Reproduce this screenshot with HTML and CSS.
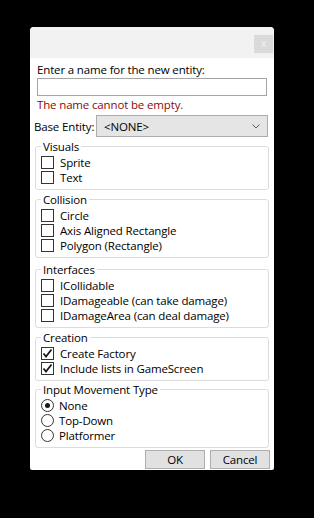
FILE: index.html
```html
<!DOCTYPE html>
<html>
    <head>
        <title>Add Entity</title>
        <link rel="stylesheet" href="styles.css">
    </head>
    <body>
        <div class="window">
            <div class="titlebar">
                <span class="close">x</span>
            </div>
            <div class="content">
                <p class="prompt">Enter a name for the new entity:</p>
                <input class="name_input" type="text">
                <p class="error">The name cannot be empty.</p>
                <div class="base_row">
                    <span class="base_label">Base Entity:</span>
                    <div class="combo">
                        <span>&lt;NONE&gt;</span>
                        <svg width="8" height="5" viewBox="0 0 8 5"><polyline points="0.5,0.5 4,4 7.5,0.5" fill="none" stroke="#606060" stroke-width="1"/></svg>
                    </div>
                </div>

                <fieldset class="group">
                    <legend>Visuals</legend>
                    <label class="row"><span class="check"></span>Sprite</label>
                    <label class="row"><span class="check"></span>Text</label>
                </fieldset>

                <fieldset class="group">
                    <legend>Collision</legend>
                    <label class="row"><span class="check"></span>Circle</label>
                    <label class="row"><span class="check"></span>Axis Aligned Rectangle</label>
                    <label class="row"><span class="check"></span>Polygon (Rectangle)</label>
                </fieldset>

                <fieldset class="group interfaces">
                    <legend>Interfaces</legend>
                    <label class="row"><span class="check"></span>ICollidable</label>
                    <label class="row"><span class="check"></span>IDamageable (can take damage)</label>
                    <label class="row"><span class="check"></span>IDamageArea (can deal damage)</label>
                </fieldset>

                <fieldset class="group">
                    <legend>Creation</legend>
                    <label class="row"><span class="check checked"><svg width="11" height="11" viewBox="0 0 11 11"><polyline points="1.5,5.5 4,8.5 9.5,1.5" fill="none" stroke="#1a1a1a" stroke-width="1.8"/></svg></span>Create Factory</label>
                    <label class="row"><span class="check checked"><svg width="11" height="11" viewBox="0 0 11 11"><polyline points="1.5,5.5 4,8.5 9.5,1.5" fill="none" stroke="#1a1a1a" stroke-width="1.8"/></svg></span>Include lists in GameScreen</label>
                </fieldset>

                <fieldset class="group movement">
                    <legend>Input Movement Type</legend>
                    <label class="row"><span class="radio selected"></span>None</label>
                    <label class="row"><span class="radio"></span>Top-Down</label>
                    <label class="row"><span class="radio"></span>Platformer</label>
                </fieldset>

                <div class="buttons">
                    <button class="btn">OK</button>
                    <button class="btn">Cancel</button>
                </div>
            </div>
        </div>
    </body>
</html>
```

FILE: styles.css
```css
*{
margin: 0;
padding: 0;
box-sizing: border-box;
font-family: 'Open Sans', 'Noto Sans', sans-serif;
}
body{
background: #000;
padding: 27px 0 0 30px;
}
.window{
width: 244px;
height: 443px;
background: #fff;
border-radius: 4px 4px 2px 2px;
overflow: hidden;
}
.titlebar{
height: 31px;
background: #f2f2f2;
display: flex;
justify-content: flex-end;
padding: 8px 1px 0 0;
}
.close{
width: 19px;
height: 18px;
background: #dadada;
color: #f4f4f4;
font-size: 10px;
line-height: 17px;
text-align: center;
}
.content{
padding: 4px 5px 0 5px;
font-size: 11.5px;
letter-spacing: -0.15px;
line-height: 15px;
color: #000;
}
.prompt{
margin-left: 2px;
}
.name_input{
display: block;
width: 230px;
height: 18px;
margin: 1px 0 0 2px;
border: 1px solid #a5a5a5;
background: #fff;
}
.error{
margin: 1px 0 0 2px;
color: #8b0a0a;
}
.base_row{
display: flex;
align-items: center;
margin-top: 3px;
margin-left: -1px;
}
.base_label{
width: 62px;
flex-shrink: 0;
white-space: nowrap;
}
.combo{
width: 172px;
height: 22px;
flex-shrink: 0;
display: flex;
align-items: center;
justify-content: space-between;
padding: 0 7px 0 7px;
background: #e5e5e5;
border: 1px solid #acacac;
}
.group{
margin-top: 2px;
border: 1px solid #dcdcdc;
border-radius: 3px;
padding: 1px 5px 4px 5px;
}
.group.interfaces{
margin-top: 4px;
}
.group.movement{
margin-top: 1px;
}
.group legend{
padding: 0 2px;
line-height: 15px;
}
.row{
display: flex;
align-items: center;
height: 15px;
white-space: nowrap;
}
.check{
width: 13px;
height: 13px;
flex-shrink: 0;
border: 1px solid #333;
background: #fff;
margin-right: 6px;
display: flex;
align-items: center;
justify-content: center;
}
.radio{
width: 13px;
height: 13px;
flex-shrink: 0;
border: 1px solid #333;
border-radius: 50%;
background: #fff;
margin-right: 5px;
display: flex;
align-items: center;
justify-content: center;
}
.radio.selected::after{
content: "";
width: 5px;
height: 5px;
border-radius: 50%;
background: #1a1a1a;
}
.buttons{
display: flex;
justify-content: flex-end;
gap: 5px;
margin: 2px -1px 0 0;
}
.btn{
width: 60px;
height: 19px;
flex-shrink: 0;
background: #e1e1e1;
border: 1px solid #adadad;
font-family: 'Open Sans', 'Noto Sans', sans-serif;
font-size: 11.5px;
letter-spacing: -0.15px;
line-height: 15px;
color: #000;
}
```
